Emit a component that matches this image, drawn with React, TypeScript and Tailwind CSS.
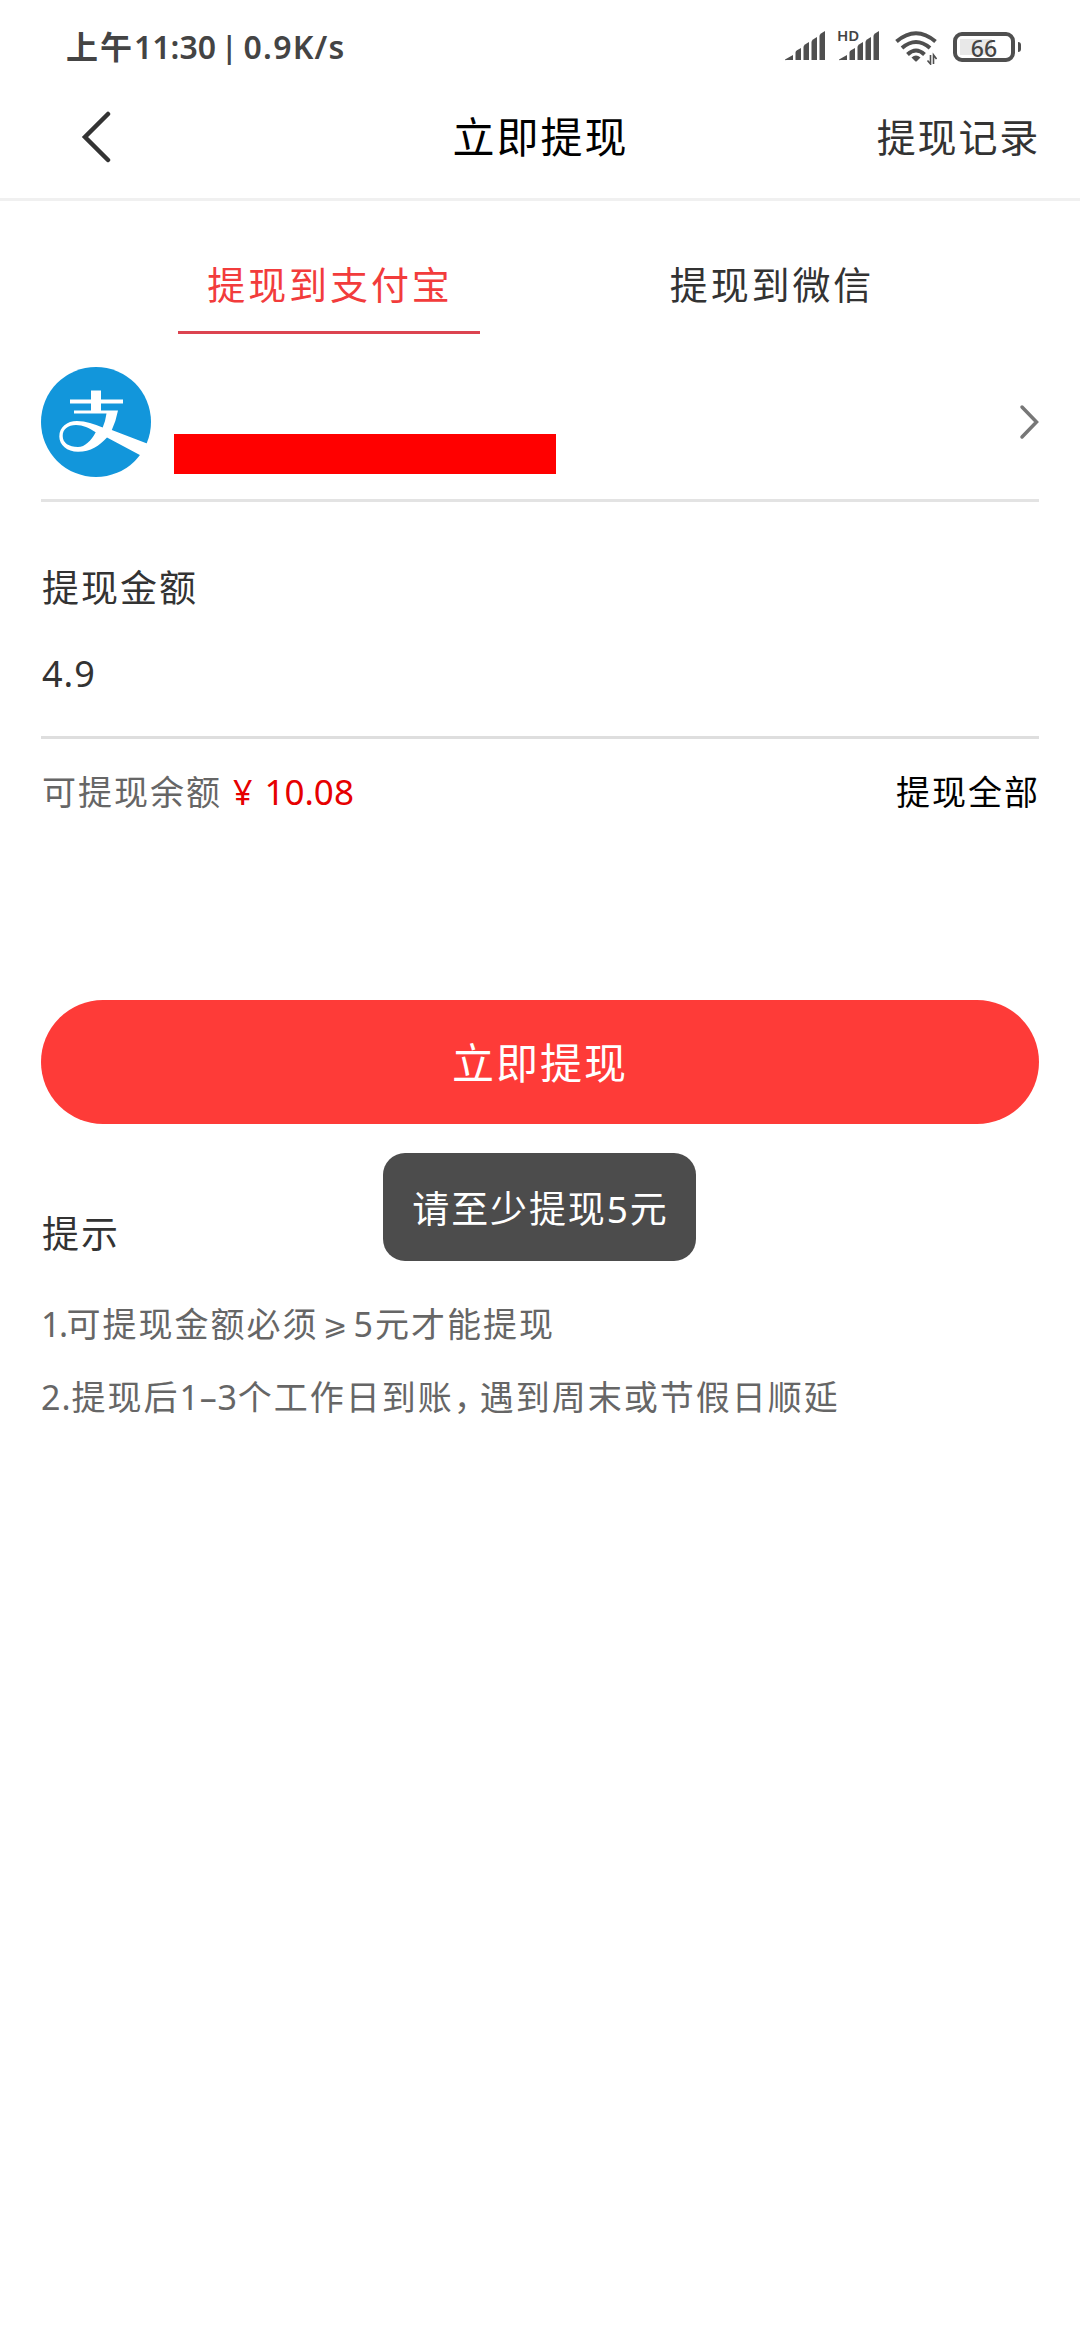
import { useState } from 'react';

const tabs = [
  { id: 'alipay', label: '提现到支付宝' },
  { id: 'wechat', label: '提现到微信' },
];

function SignalIcon() {
  return (
    <svg width="40" height="30" viewBox="0 0 40 30" fill="#4f4f4f">
      <path d="M0 28.5 8 24v5H1.5Q0 29.5 0 28.5Z" />
      <path d="M10.5 21.5Q10.5 20 12 19.3L16 17v12h-5.5Z" />
      <path d="M18.5 16Q18.5 14.500 20 13.500L24 11v18h-5.500Z" />
      <path d="M26.500 11Q26.500 9.500 28 8.500L32 6v23h-5.500Z" />
      <path d="M34.500 5Q34.500 3.500 36 2.500L40 0v29h-5.500Z" />
    </svg>
  );
}

function HdSignalIcon() {
  return (
    <div className="relative">
      <SignalIcon />
      <span className="absolute left-[-2px] top-[-3px] text-[15px] font-semibold leading-none">
        HD
      </span>
    </div>
  );
}

function WifiIcon() {
  return (
    <svg
      width="42"
      height="34"
      viewBox="0 0 42 34"
      fill="none"
      stroke="#4f4f4f"
      strokeWidth="4"
    >
      <path d="M1.500 10.500Q21-6 40.500 10.500" />
      <path d="M7 17Q21 5 35 17" />
      <path d="M12.500 23.500Q21 15.500 29.500 23.500" />
      <path
        d="M16.500 26.500Q21 22.500 25.500 26.500L22 30Q21 31 20 30Z"
        fill="#4f4f4f"
        stroke="none"
      />
      <path
        d="M35.500 24V33L32.500 29.500M38.500 33V24L41.500 28"
        strokeWidth="1.600"
      />
    </svg>
  );
}

function BatteryIcon({ level }: { level: number }) {
  return (
    <div className="flex items-center">
      <div className="relative flex h-[30px] w-[62px] items-center justify-center rounded-[9px] border-4 border-[#4f4f4f]">
        <div className="absolute left-[3px] top-[3px] h-[16px] w-[32px] bg-[#e8e8e8]" />
        <span className="relative top-px text-[23px] font-medium leading-none">
          {level}
        </span>
      </div>
      <div className="ml-[3px] h-[10px] w-[3px] rounded-r-sm bg-[#4f4f4f]" />
    </div>
  );
}

function AlipayLogo() {
  return (
    <svg width="110" height="110" viewBox="0 0 110 110">
      <circle cx="55" cy="55" r="55" fill="#1296db" />
      <path
        fill="#fff"
        fillRule="evenodd"
        d="M50 23.500H60V32.500H82V36.500H60V43.500H77Q75 54 70.800 63L106 76.500 111 78 104 91 99.300 88.300 66 70.500C58 79 50 84.700 37 84.700C26 84.700 18.300 78 18.300 69.500C18.300 60 26 54 36 54C45 54 53 57 61.700 60.500Q64.500 54 65.500 46.500H33V43.500H50V36.500H29V32.500H50ZM54.700 65.300C48 61 42 58 35 58C27 58 21.700 62 21.700 69C21.700 76 28 80 37 80C44 80 50 74 54.700 65.300Z"
      />
    </svg>
  );
}

export default function App() {
  const [activeTab, setActiveTab] = useState('alipay');
  const [amount, setAmount] = useState('4.9');

  return (
    <div className="relative flex h-[2340px] w-[1080px] flex-col bg-white font-['Noto_Sans','Noto_Sans_CJK_SC',sans-serif] text-[#333]">
      {/* Status bar */}
      <div className="flex h-[92px] items-center justify-between pl-[66px] pr-[59px] text-[#444]">
        <div className="flex items-center pt-[2px] text-[32px] font-semibold leading-none">
          <span className="tracking-[2px]">上午</span>
          <span>11:30</span>
          <span className="ml-[5px] text-[30px]">|</span>
          <span className="ml-[6px] tracking-[1.200px]">0.9K/s</span>
        </div>
        <div className="flex items-center">
          <SignalIcon />
          <div className="ml-[14px]">
            <HdSignalIcon />
          </div>
          <div className="ml-[16px] mt-[3px]">
            <WifiIcon />
          </div>
          <div className="ml-[16px] mt-[2px]">
            <BatteryIcon level={66} />
          </div>
        </div>
      </div>

      {/* Header */}
      <div className="grid h-[109px] grid-cols-[1fr_auto_1fr] items-center border-b-[3px] border-[#f0f0f0] pb-[16px] pl-[41px] pr-[40px]">
        <button className="pl-[39px]">
          <svg
            width="32"
            height="52"
            viewBox="0 0 32 52"
            fill="none"
            stroke="#333"
            strokeWidth="4.500"
            strokeLinecap="round"
          >
            <path d="M28 3 5 26 28 49" />
          </svg>
        </button>
        <h1 className="text-[42px] leading-none tracking-[2px] text-black">
          立即提现
        </h1>
        <button className="pb-[2px] text-right text-[39px] leading-none tracking-[1.800px]">
          提现记录
        </button>
      </div>

      {/* Tabs */}
      <div className="flex h-[133px] gap-[140px] pl-[178px]">
        {tabs.map((tab) => (
          <button
            key={tab.id}
            onClick={() => setActiveTab(tab.id)}
            className={`w-[302px] border-b-[3px] pl-[2px] pt-[36px] text-[38px] leading-none tracking-[2.900px] ${
              activeTab === tab.id
                ? 'border-[#dc4450] text-[#f23c3c]'
                : 'border-transparent'
            }`}
          >
            {tab.label}
          </button>
        ))}
      </div>

      <div className="flex flex-col px-[41px]">
        {/* Account */}
        <div className="flex h-[168px] items-start border-b-[3px] border-[#e3e3e3] pt-[33px]">
          <AlipayLogo />
          <div className="ml-[23px] mt-[67px] h-[40px] w-[382px] bg-[#ff0000]" />
          <svg
            className="ml-auto mt-[37px]"
            width="20"
            height="36"
            viewBox="0 0 20 36"
            fill="none"
            stroke="#777"
            strokeWidth="3.500"
            strokeLinecap="round"
          >
            <path d="M3 3 17.500 18 3 33" />
          </svg>
        </div>

        {/* Amount */}
        <div className="flex h-[237px] flex-col border-b-[3px] border-[#dedede] pl-px pt-[64px]">
          <label className="text-[37px] leading-[44px] tracking-[2px]">
            提现金额
          </label>
          <input
            value={amount}
            onChange={(e) => setAmount(e.target.value)}
            className="mt-[42px] h-[44px] text-[36px] leading-[44px] tracking-[1px] outline-none"
          />
        </div>

        <div className="mt-[31px] flex h-[44px] items-center pl-px text-[34px] leading-[44px]">
          <span className="tracking-[2px] text-[#666]">可提现余额</span>
          <span className="ml-[11px] text-[#e60000]">¥</span>
          <span className="ml-[12px] text-[35px] text-[#e60000]">10.08</span>
          <button className="ml-auto mr-[-1px] tracking-[2px] text-black">
            提现全部
          </button>
        </div>

        <button className="mt-[186px] h-[124px] rounded-full bg-[#fe3b38] text-[42px] tracking-[2px] text-white">
          立即提现
        </button>

        {/* Tips */}
        <h2 className="mt-[88px] pl-px text-[37px] leading-[44px] tracking-[2px]">
          提示
        </h2>
        <div className="mt-[32px] text-[34px] leading-[73px] tracking-[2px] text-[#666]">
          <p className="h-[73px]">
            <span className="tracking-[-1.500px]">1.</span>可提现金额必须
            <span className="relative top-[-2px] ml-[4px] mr-[7px] text-[29px] leading-none tracking-normal">
              ⩾
            </span>
            <span className="tracking-[2px]">5</span>元才能提现
          </p>
          <p className="h-[73px]">
            <span className="tracking-[1px]">2.</span>提现后
            <span className="tracking-[0.800px]">1–3</span>个工作日到账
            <span className="tracking-[9px] [font-feature-settings:'halt']">
              ，
            </span>
            遇到周末或节假日顺延
          </p>
        </div>
      </div>

      {/* Toast */}
      <div className="absolute left-[383px] top-[1153px] flex h-[108px] w-[313px] items-center justify-center rounded-[22px] bg-[#4c4c4c] pl-[2px] pt-[2px] text-[37px] leading-none tracking-[1.900px] text-white">
        请至少提现5元
      </div>
    </div>
  );
}
